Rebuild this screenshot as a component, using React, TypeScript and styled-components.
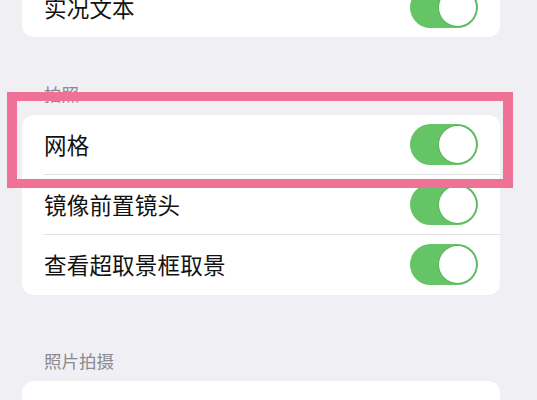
import React from "react";
import styled, { createGlobalStyle } from "styled-components";

const GlobalStyle = createGlobalStyle`
  html, body {
    margin: 0;
    padding: 0;
    background: #f0eff4;
    overflow: hidden;
  }
  body {
    font-family: "Noto Sans CJK SC", "Noto Sans", sans-serif;
  }
`;

const Page = styled.div`
  position: relative;
  width: 537px;
  height: 400px;
  overflow: hidden;
  background: #f0eff4;
`;

const Content = styled.div`
  display: flex;
  flex-direction: column;
  margin-top: -23px;
  padding: 0 37px 0 22px;
`;

const Card = styled.div`
  background: #ffffff;
  border-radius: 12px;
  overflow: hidden;
`;

const Row = styled.div<{ $divider?: boolean }>`
  position: relative;
  height: 60px;
  display: flex;
  align-items: center;
  justify-content: space-between;
  padding: 0 22px;
  box-sizing: border-box;

  &::after {
    content: "";
    display: ${(p) => (p.$divider ? "block" : "none")};
    position: absolute;
    left: 22px;
    right: 0;
    bottom: 0;
    height: 1px;
    background: #e2e2e6;
  }
`;

const Label = styled.span<{ $faint?: boolean }>`
  font-size: 22.5px;
  line-height: 1;
  color: ${(p) => (p.$faint ? "#bfe7df" : "#111111")};
  letter-spacing: 0.2px;
`;

const SectionTitle = styled.div<{ $top: number }>`
  font-size: 17.5px;
  line-height: 1;
  color: #8a8a8e;
  padding: ${(p) => p.$top}px 22px 12px;
`;

const Track = styled.div`
  width: 68px;
  height: 41px;
  border-radius: 21px;
  background: #65c466;
  display: flex;
  align-items: center;
  justify-content: flex-end;
  padding: 2px;
  box-sizing: border-box;
`;

const Knob = styled.div`
  width: 37px;
  height: 37px;
  border-radius: 50%;
  background: #ffffff;
  box-shadow: 0 0 0 1px #5bb45c;
`;

const Highlight = styled.div`
  position: absolute;
  left: 7px;
  top: 92px;
  width: 506px;
  height: 96px;
  box-sizing: border-box;
  border: 10px solid #f07196;
  border-bottom-width: 9px;
  border-top-width: 9px;
  pointer-events: none;
`;

const Toggle: React.FC = () => (
  <Track>
    <Knob />
  </Track>
);

const App: React.FC = () => {
  return (
    <>
      <GlobalStyle />
      <Page>
        <Content>
          <Card>
            <Row>
              <Label>实况文本</Label>
              <Toggle />
            </Row>
          </Card>

          <SectionTitle $top={48}>拍照</SectionTitle>
          <Card>
            <Row $divider>
              <Label>网格</Label>
              <Toggle />
            </Row>
            <Row $divider>
              <Label>镜像前置镜头</Label>
              <Toggle />
            </Row>
            <Row>
              <Label>查看超取景框取景</Label>
              <Toggle />
            </Row>
          </Card>

          <SectionTitle $top={57}>照片拍摄</SectionTitle>
          <Card>
            <Row>
              <Label $faint>摄影风格</Label>
            </Row>
          </Card>
        </Content>
        <Highlight />
      </Page>
    </>
  );
};

export default App;
